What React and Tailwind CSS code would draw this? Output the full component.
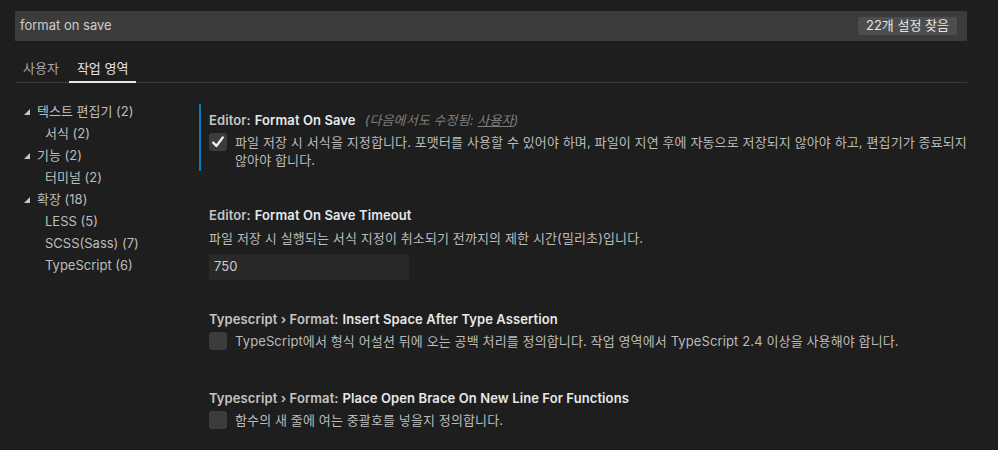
const font = { fontFamily: 'Inter, "Noto Sans CJK KR", sans-serif' };

function Tri() {
  return (
    <svg width="6" height="6" viewBox="0 0 6 6" className="shrink-0">
      <polygon points="6,0 6,6 0,6" fill="#c5c5c5" />
    </svg>
  );
}

function Check({ checked }) {
  return (
    <div className="flex h-[18px] w-[18px] shrink-0 items-center justify-center rounded-[3px] bg-[#3c3c3c]">
      {checked && (
        <svg width="14" height="14" viewBox="0 0 14 14">
          <path d="M2.2 7.6 L5.4 11 L11.8 2.4" fill="none" stroke="#f0f0f0" strokeWidth="2.4" strokeLinecap="round" strokeLinejoin="round" />
        </svg>
      )}
    </div>
  );
}

const tree = [
  { label: "텍스트 편집기 (2)", parent: true },
  { label: "서식 (2)" },
  { label: "기능 (2)", parent: true },
  { label: "터미널 (2)" },
  { label: "확장 (18)", parent: true },
  { label: "LESS (5)" },
  { label: "SCSS(Sass) (7)" },
  { label: "TypeScript (6)" },
];

function Title({ prefix, name, extra }) {
  return (
    <div className="flex h-[18px] items-center text-[13px] leading-[18px] tracking-[0.1px]">
      <span className="font-semibold text-[#c4c4c4]">{prefix}</span>
      <span className="ml-[4px] font-semibold text-[#e8e8e8]">{name}</span>
      {extra}
    </div>
  );
}

export default function App() {
  return (
    <div className="h-[450px] w-[998px] overflow-hidden bg-[#1e1e1e] pl-[15px] pr-[31px] pt-[11px]" style={font}>
      {/* search */}
      <div className="flex h-[30px] items-center justify-between bg-[#3c3c3c] pl-[5px] pr-[10px]">
        <span className="text-[13px] text-[#cccccc]">format on save</span>
        <span className="flex h-[18px] items-center rounded-[2px] bg-[#4d4d4d] px-[8px] text-[13px] text-[#e6e6e6]">22개 설정 찾음</span>
      </div>

      {/* tabs */}
      <div className="mt-[14px] flex h-[28px] border-b border-[#3a3a3a] text-[13px]">
        <div className="flex items-start px-[8px] pt-[4px] text-[#a6a6a6]">사용자</div>
        <div className="-mb-px ml-[2px] flex items-start border-b-2 border-[#e8e8e8] px-[8px] pt-[4px] text-[#e6e6e6]">작업 영역</div>
      </div>

      <div className="flex">
        {/* tree */}
        <div className="w-[184px] shrink-0 pt-[18px]">
          {tree.map((t) => (
            <div key={t.label} className="flex h-[22px] items-center text-[13px] text-[#bdbdbd]">
              {t.parent ? (
                <div className="flex items-center pl-[9px]">
                  <Tri />
                  <span className="ml-[7px]">{t.label}</span>
                </div>
              ) : (
                <span className="pl-[30px]">{t.label}</span>
              )}
            </div>
          ))}
        </div>

        {/* settings */}
        <div className="flex-1 pt-[21px]">
          <div className="border-l-2 border-[#0b7ac2] pb-[2px] pl-[8px] pt-[7px]">
            <Title
              prefix="Editor:"
              name="Format On Save"
              extra={
                <span className="ml-[9px] italic text-[#7e7e7e]">
                  (다음에서도 수정됨: <span className="underline">사용자</span>)
                </span>
              }
            />
            <div className="mt-[4px] flex items-start">
              <Check checked />
              <p className="ml-[8px] w-[740px] break-keep text-[13px] leading-[18px] tracking-[0.12px] text-[#bbbbbb]">
                파일 저장 시 서식을 지정합니다. 포맷터를 사용할 수 있어야 하며, 파일이 지연 후에 자동으로 저장되지 않아야 하고, 편집기가 종료되지 않아야 합니다.
              </p>
            </div>
          </div>

          <div className="mt-[35px] pl-[10px]">
            <Title prefix="Editor:" name="Format On Save Timeout" />
            <p className="mt-[5px] text-[13px] leading-[18px] tracking-[0.12px] text-[#bbbbbb]">
              파일 저장 시 실행되는 서식 지정이 취소되기 전까지의 제한 시간(밀리초)입니다.
            </p>
            <div className="mt-[7px] flex h-[26px] w-[200px] items-center bg-[#292929] pl-[5px] text-[13px] text-[#cccccc]">750</div>
          </div>

          <div className="mt-[30px] pl-[10px]">
            <Title prefix="Typescript › Format:" name="Insert Space After Type Assertion" />
            <div className="mt-[4px] flex items-center">
              <Check />
              <p className="ml-[8px] text-[13px] leading-[18px] tracking-[0.12px] text-[#bbbbbb]">
                TypeScript에서 형식 어설션 뒤에 오는 공백 처리를 정의합니다. 작업 영역에서 TypeScript 2.4 이상을 사용해야 합니다.
              </p>
            </div>
          </div>

          <div className="mt-[39px] pl-[10px]">
            <Title prefix="Typescript › Format:" name="Place Open Brace On New Line For Functions" />
            <div className="mt-[4px] flex items-center">
              <Check />
              <p className="ml-[8px] text-[13px] leading-[18px] tracking-[0.12px] text-[#bbbbbb]">
                함수의 새 줄에 여는 중괄호를 넣을지 정의합니다.
              </p>
            </div>
          </div>
        </div>
      </div>
    </div>
  );
}
